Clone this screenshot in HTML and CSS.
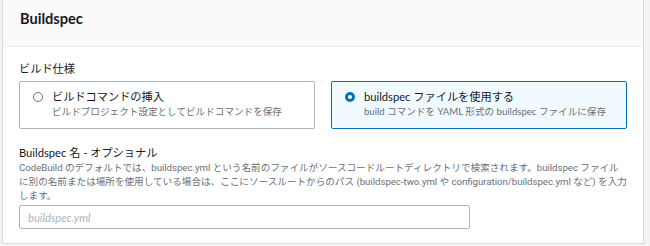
FILE: index.html
```html
<!DOCTYPE html>
<html lang="ja">
<head>
  <meta charset="UTF-8">
  <meta name="viewport" content="width=device-width, initial-scale=1.0">
  <title>Buildspec</title>
  <link rel="stylesheet" href="styles.css">
</head>
<body>
  <div class="panel">
    <div class="panel-header">
      <h2>Buildspec</h2>
    </div>

    <div class="panel-body">
      <div class="field-label">ビルド仕様</div>

      <div class="tiles">
        <label class="tile">
          <input type="radio" name="spec" value="insert">
          <span class="radio"></span>
          <span class="tile-text">
            <span class="tile-title">ビルドコマンドの挿入</span>
            <span class="tile-desc">ビルドプロジェクト設定としてビルドコマンドを保存</span>
          </span>
        </label>
        <label class="tile selected">
          <input type="radio" name="spec" value="file" checked>
          <span class="radio"></span>
          <span class="tile-text">
            <span class="tile-title">buildspec ファイルを使用する</span>
            <span class="tile-desc">build コマンドを YAML 形式の buildspec ファイルに保存</span>
          </span>
        </label>
      </div>

      <div class="form-field">
        <label for="specName" class="field-label">Buildspec 名 - オプショナル</label>
        <p class="field-desc">CodeBuild のデフォルトでは、buildspec.yml という名前のファイルがソースコードルートディレクトリで検索されます。buildspec ファイルに別の名前または場所を使用している場合は、ここにソースルートからのパス (buildspec-two.yml や configuration/buildspec.yml など) を入力します。</p>
        <input type="text" id="specName" class="text-input" placeholder="buildspec.yml">
      </div>
    </div>
  </div>
</body>
</html>
```

FILE: styles.css
```css
body {
  margin: 0;
  background: #f2f3f3;
  font-family: Lato, "Noto Sans CJK JP", sans-serif;
  color: #16191f;
}
.panel {
  margin-left: 2px;
  width: 640px;
  background: white;
  border: 1px solid #d5dbdb;
  border-top: none;
}
.panel-header {
  background: #fafafa;
  border-bottom: 1px solid #eaeded;
  padding: 9px 17px 0;
  height: 37px;
}
.panel-header h2 {
  margin: 0;
  font-size: 14.6px;
  line-height: 20px;
  font-weight: bold;
}
.panel-body {
  padding: 14px 16px 14px;
}
.field-label {
  display: block;
  font-size: 11.2px;
  line-height: 16px;
  margin-bottom: 4px;
}

.tiles {
  display: flex;
  gap: 16px;
}
.tile {
  flex: 1;
  display: flex;
  align-items: flex-start;
  gap: 9px;
  padding: 7px 13px 9px;
  border: 1px solid #aab7b8;
  border-radius: 2px;
  cursor: pointer;
}
.tile.selected {
  border-color: #0073bb;
  background: #f1faff;
}
.tile input {
  display: none;
}
.radio {
  width: 10px;
  height: 10px;
  box-sizing: border-box;
  margin-top: 3px;
  border: 1.3px solid #687078;
  border-radius: 50%;
  background: white;
  flex-shrink: 0;
}
.tile input:checked + .radio {
  border: 3px solid #0073bb;
}
.tile-text {
  display: flex;
  flex-direction: column;
}
.tile-title {
  font-size: 11.2px;
  line-height: 16px;
}
.tile-desc {
  font-size: 9.6px;
  line-height: 14px;
  color: #687078;
}

.form-field {
  margin-top: 16px;
}
.form-field .field-label {
  margin-bottom: 0;
}
.field-desc {
  margin: 0 0 2px;
  font-family: Roboto, "Noto Sans CJK JP", sans-serif;
  font-size: 9.6px;
  line-height: 14px;
  color: #687078;
}
.text-input {
  width: 451px;
  height: 24px;
  box-sizing: border-box;
  padding: 0 8px;
  border: 1px solid #aab7b8;
  border-radius: 2px;
  font-family: inherit;
  font-size: 11.2px;
}
.text-input::placeholder {
  color: #aab7b8;
  font-style: italic;
}
```
